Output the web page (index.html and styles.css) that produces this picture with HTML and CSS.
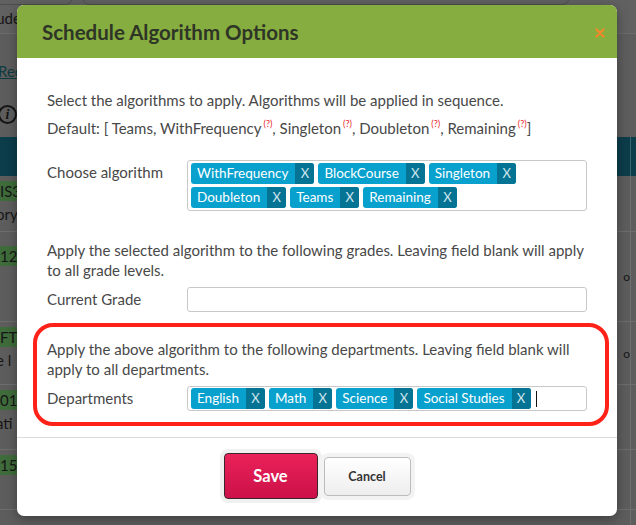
FILE: index.html
```html
<!DOCTYPE html>
<html>
<head>
<meta charset="utf-8">
<link rel="stylesheet" href="styles.css">
</head>
<body>
<div class="page">
  <div class="bg">
    <div class="bg-top">
      <div class="bg-tabs">
        <div class="bg-tab bg-tab-a"></div>
        <div class="bg-tab bg-tab-b"></div>
      </div>
      <span class="bg-top-text">Stude</span>
    </div>
    <div class="bg-link"><a>Rec</a></div>
    <div class="bg-info"><span class="info-icon">i</span></div>
    <div class="bg-band"><div class="cell-l"></div><div class="cell-r"></div></div>
    <div class="bg-row r1"><div class="cell-l"><span class="badge">IS3</span><span class="txt">ory</span></div><div class="cell-m"></div><div class="cell-r"></div></div>
    <div class="bg-row r2"><div class="cell-l"><span class="badge">12</span></div><div class="cell-m"><span class="dot">o</span></div><div class="cell-r"></div></div>
    <div class="bg-row r3"><div class="cell-l"><span class="badge">FT1</span><span class="txt">e l</span></div><div class="cell-m"><span class="dot">o</span></div><div class="cell-r"></div></div>
    <div class="bg-row r4"><div class="cell-l"><span class="badge">01</span><span class="txt">ati</span></div><div class="cell-m"></div><div class="cell-r"></div></div>
    <div class="bg-row r5"><div class="cell-l"><span class="badge">15</span></div><div class="cell-m"></div><div class="cell-r"></div></div>
    <div class="bg-row r6"><div class="cell-l"></div><div class="cell-m"></div><div class="cell-r"></div></div>
  </div>

  <div class="modal">
    <div class="modal-header">
      <h2 class="modal-title">Schedule Algorithm Options</h2>
      <svg class="close" width="10" height="10" viewBox="0 0 10 10"><path d="M1.5 1.5 L8.5 8.5 M8.5 1.5 L1.5 8.5" stroke="#f0892a" stroke-width="2.4" stroke-linecap="round"/></svg>
    </div>
    <div class="modal-body">
      <p class="intro">Select the algorithms to apply. Algorithms will be applied in sequence.</p>
      <p class="default">Default: [ Teams, WithFrequency<sup>(?)</sup>, Singleton<sup>(?)</sup>, Doubleton<sup>(?)</sup>, Remaining<sup>(?)</sup>]</p>

      <div class="field field-algo">
        <label class="field-label">Choose algorithm</label>
        <div class="tagbox">
          <span class="tag"><span class="tag-text">WithFrequency</span><span class="tag-x">X</span></span>
          <span class="tag"><span class="tag-text">BlockCourse</span><span class="tag-x">X</span></span>
          <span class="tag"><span class="tag-text">Singleton</span><span class="tag-x">X</span></span>
          <span class="tag"><span class="tag-text">Doubleton</span><span class="tag-x">X</span></span>
          <span class="tag"><span class="tag-text">Teams</span><span class="tag-x">X</span></span>
          <span class="tag"><span class="tag-text">Remaining</span><span class="tag-x">X</span></span>
        </div>
      </div>

      <p class="note note-grade">Apply the selected algorithm to the following grades. Leaving field blank will apply to all grade levels.</p>

      <div class="field field-grade">
        <label class="field-label">Current Grade</label>
        <div class="input"></div>
      </div>

      <div class="highlight">
        <p class="note">Apply the above algorithm to the following departments. Leaving field blank will apply to all departments.</p>
        <div class="field field-dept">
          <label class="field-label">Departments</label>
          <div class="tagbox tagbox-single">
            <span class="tag"><span class="tag-text">English</span><span class="tag-x">X</span></span>
            <span class="tag"><span class="tag-text">Math</span><span class="tag-x">X</span></span>
            <span class="tag"><span class="tag-text">Science</span><span class="tag-x">X</span></span>
            <span class="tag"><span class="tag-text">Social Studies</span><span class="tag-x">X</span></span>
            <span class="caret"></span>
          </div>
        </div>
      </div>
    </div>
    <div class="modal-footer">
      <button class="btn btn-save">Save</button>
      <button class="btn btn-cancel">Cancel</button>
    </div>
  </div>
</div>
</body>
</html>
```

FILE: styles.css
```css
* { box-sizing: border-box; }
html, body { margin: 0; padding: 0; }
body {
  width: 636px;
  height: 525px;
  overflow: hidden;
  background: #5d5d5d;
  font-family: "Lato", "Noto Sans", sans-serif;
}
.page {
  position: relative;
  width: 636px;
  height: 525px;
  overflow: hidden;
}

/* ---------- dimmed background page ---------- */
.bg {
  display: flex;
  flex-direction: column;
  color: #161616;
  font-size: 15px;
}
.bg-top {
  height: 34px;
  border-bottom: 1px solid #6b6b6b;
  background: #616161;
  display: flex;
  flex-direction: column;
}
.bg-tabs {
  height: 5px;
  display: flex;
  gap: 11px;
  overflow: hidden;
}
.bg-tab {
  height: 20px;
  margin-top: -15px;
  border: 1px solid #4e4e4e;
  border-radius: 6px;
  flex: none;
}
.bg-tab-a { width: 90px; margin-left: -18px; }
.bg-tab-b { width: 486px; }
.bg-top-text {
  margin: 3px 0 0 -17px;
  line-height: 20px;
  color: #151515;
}
.bg-link {
  height: 58px;
  display: flex;
  align-items: center;
  padding-top: 16px;
}
.bg-link a {
  color: #0e3c40;
  text-decoration: underline;
  margin-left: -2px;
}
.bg-info {
  height: 45px;
  display: flex;
  align-items: center;
}
.info-icon {
  width: 19px;
  height: 19px;
  border: 2px solid #151515;
  border-radius: 50%;
  margin-left: -2px;
  display: flex;
  align-items: center;
  justify-content: center;
  font-family: "Liberation Serif", serif;
  font-style: italic;
  font-weight: bold;
  font-size: 14px;
  color: #151515;
}
.bg-band {
  height: 39px;
  background: #0c3d4a;
  display: flex;
}
.bg-band .cell-l { flex: 1; }
.bg-band .cell-r { width: 6px; border-left: 1px solid #3c6470; }
.bg-row {
  display: flex;
  border-bottom: 1px solid #6e6e6e;
}
.r1 { height: 56px; }
.r2 { height: 90px; }
.r3 { height: 63px; }
.r4 { height: 65px; }
.r5 { height: 60px; }
.r6 { height: 20px; border-bottom: none; }
.cell-l {
  width: 60px;
  display: flex;
  flex-direction: column;
  align-items: flex-start;
  padding-top: 5px;
  gap: 3px;
  overflow: hidden;
}
.r2 .cell-l { padding-top: 14px; }
.cell-m {
  flex: 1;
  display: flex;
  justify-content: flex-end;
  align-items: center;
  padding-right: 9px;
}
.cell-r { width: 6px; border-left: 1px solid #6e6e6e; }
.badge {
  background: #3f6c3b;
  color: #151515;
  padding: 1px 3px 1px 0;
  line-height: 18px;
}
.txt { margin-left: -4px; line-height: 20px; }
.dot { font-size: 12px; color: #151515; margin-right: -9px; }

/* ---------- modal ---------- */
.modal {
  position: absolute;
  left: 17px;
  top: 5px;
  width: 600px;
  height: 511px;
  background: #fff;
  border-radius: 7px;
  overflow: hidden;
  box-shadow: 0 3px 12px rgba(0,0,0,0.35);
  display: flex;
  flex-direction: column;
}
.modal-header {
  height: 53px;
  background: #86ad3f;
  display: flex;
  align-items: center;
  justify-content: space-between;
  padding: 0 12px 0 25px;
}
.modal-title {
  margin: 0;
  font-size: 20.5px;
  font-weight: 700;
  color: #2e3527;
}
.close { margin-top: 2px; }

.modal-body {
  padding: 32px 30px 11px 30px;
  color: #484848;
  font-size: 15px;
}
.modal-body p { margin: 0; line-height: 20px; }
.intro { margin-bottom: 8px !important; }
.default { margin-bottom: 22px !important; }
.default sup {
  color: #e8231f;
  font-size: 9px;
  line-height: 0;
  vertical-align: 7px;
  margin-left: 2px;
}
.field {
  display: flex;
  align-items: flex-start;
}
.field-label {
  width: 140px;
  flex: none;
  padding-top: 2px;
  line-height: 20px;
  color: #484848;
}
.tagbox {
  flex: 1;
  border: 1px solid #c8c8c8;
  border-radius: 3px;
  padding: 2px 3px 2px 3px;
  display: flex;
  flex-wrap: wrap;
  align-items: center;
  gap: 3px 4px;
}
.tagbox-single { padding: 1px 3px 1px 3px; }
.tag {
  display: flex;
  height: 21px;
  border-radius: 3px;
  overflow: hidden;
  background: #08a1ce;
  color: #fff;
  font-size: 13.5px;
  line-height: 21px;
}
.tag-text { padding: 0 7px 0 6px; }
.tag-x {
  width: 19px;
  text-align: center;
  background: #057494;
  color: #cfe6ee;
  font-size: 13px;
}
.caret {
  width: 1px;
  height: 16px;
  background: #111;
  margin-left: 1px;
}
.note-grade { margin-top: 29px !important; }
.field-grade { margin-top: 7px; }
.input {
  flex: 1;
  height: 25px;
  border: 1px solid #c8c8c8;
  border-radius: 3px;
}
.highlight {
  margin: 11px -22px 0 -14px;
  border: 4px solid #ff2219;
  border-radius: 20px;
  padding: 12px 18px 11px 10px;
}
.field-dept { margin-top: 7px; }

.modal-footer {
  border-top: 1px solid #dcdcdc;
  flex: 1;
  display: flex;
  justify-content: center;
  align-items: center;
  gap: 6px;
  padding-bottom: 2px;
}
.btn {
  font-family: "Lato", "Noto Sans", sans-serif;
  font-weight: 700;
  cursor: pointer;
  border-radius: 4px;
}
.btn-save {
  width: 94px;
  height: 46px;
  border: 1px solid #3d2530;
  background: linear-gradient(#ea2259, #cc1049);
  color: #fff;
  font-size: 16.5px;
  box-shadow: 0 0 0 4px #f0f0f0;
}
.btn-cancel {
  width: 87px;
  height: 39px;
  border: 1px solid #bcbcbc;
  background: linear-gradient(#ffffff, #eeeeee);
  color: #333;
  font-size: 12.5px;
  box-shadow: 0 0 0 4px #f3f3f3;
}
```
